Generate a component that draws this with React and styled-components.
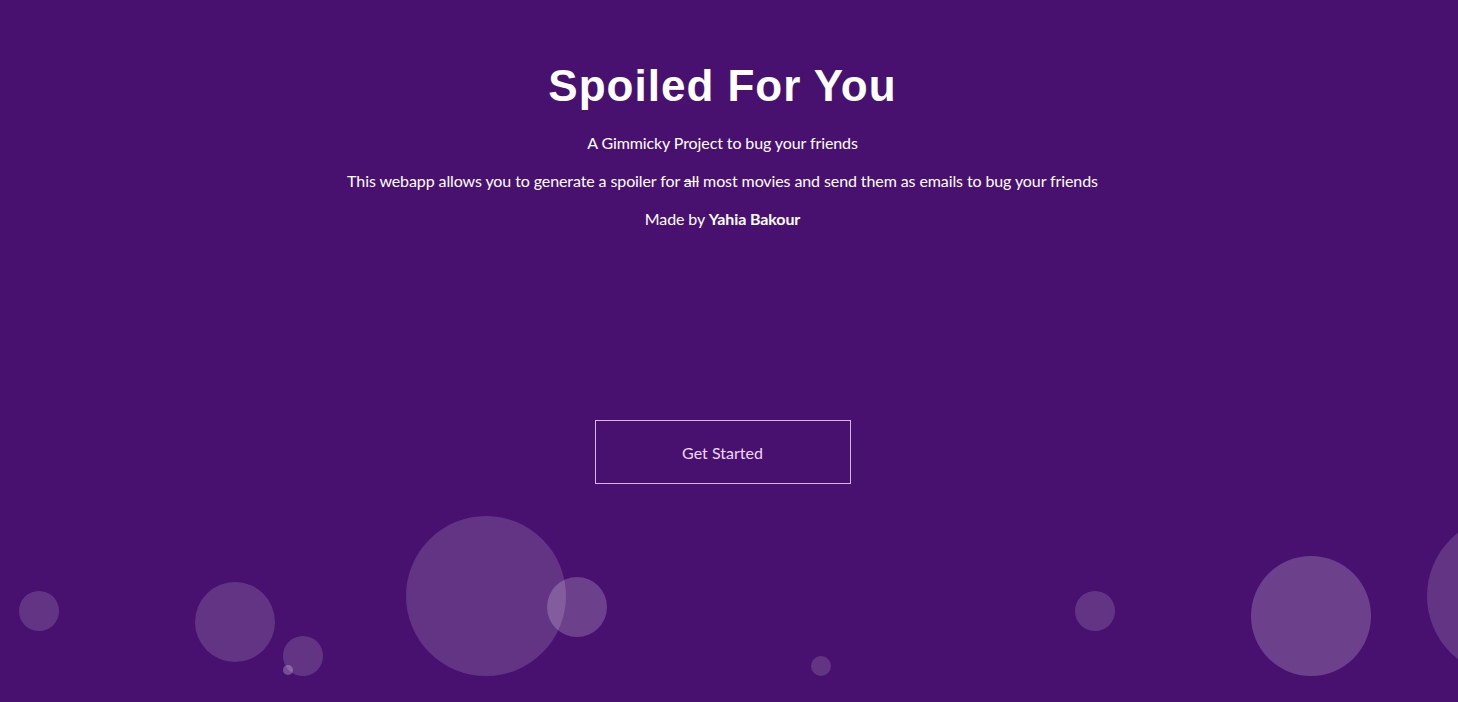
import React from 'react';
import styled, { createGlobalStyle } from 'styled-components';

const GlobalStyle = createGlobalStyle`
  html, body {
    margin: 0;
    padding: 0;
    background-color: #48116f;
  }
  body {
    font-family: Lato, "Open Sans", sans-serif;
    color: #ffffff;
    overflow: hidden;
  }
`;

const Page = styled.div`
  position: relative;
  height: 702px;
  overflow: hidden;
  background-color: #48116f;
`;

const Hero = styled.header`
  display: flex;
  flex-direction: column;
  align-items: center;
  padding: 61px 13px 0 0;
  text-align: center;
`;

const Title = styled.h1`
  margin: 0 0 21px;
  font-family: "Liberation Sans", Arial, sans-serif;
  font-size: 44px;
  font-weight: 700;
  line-height: 50px;
  letter-spacing: 1px;
  color: #ffffff;
`;

const Line = styled.p`
  margin: 0 0 16px;
  font-size: 16px;
  line-height: 22px;
  letter-spacing: -0.1px;
  color: #ffffff;

  &:last-of-type {
    margin-bottom: 0;
  }
`;

const Struck = styled.s`
  text-decoration-thickness: 1px;
`;

const Author = styled.strong`
  font-weight: 700;
`;

const StartButton = styled.button`
  margin-top: 190px;
  width: 256px;
  height: 64px;
  border: 1px solid #d7b6ee;
  background: transparent;
  color: #eed9fb;
  font-family: Lato, sans-serif;
  font-size: 16px;
  cursor: pointer;

  &:hover {
    background-color: rgba(255, 255, 255, 0.08);
  }
`;

const Bubbles = styled.div`
  position: absolute;
  inset: 0;
  pointer-events: none;
`;

const Bubble = styled.span`
  position: absolute;
  border-radius: 50%;
  background-color: rgba(255, 255, 255, ${p => p.$alpha || 0.15});
`;

const bubbles = [
  { x: 39, y: 611, r: 20 },
  { x: 235, y: 622, r: 40 },
  { x: 303, y: 656, r: 20 },
  { x: 288, y: 670, r: 5, alpha: 0.25 },
  { x: 486, y: 596, r: 80 },
  { x: 577, y: 607, r: 30, alpha: 0.2 },
  { x: 821, y: 666, r: 10 },
  { x: 1095, y: 611, r: 20 },
  { x: 1311, y: 616, r: 60, alpha: 0.2 },
  { x: 1507, y: 596, r: 80 },
];

const App = () => (
  <Page>
    <GlobalStyle />
    <Bubbles>
      {bubbles.map((b, i) => (
        <Bubble
          key={i}
          $alpha={b.alpha}
          style={{ left: b.x - b.r, top: b.y - b.r, width: b.r * 2, height: b.r * 2 }}
        />
      ))}
    </Bubbles>
    <Hero>
      <Title>Spoiled For You</Title>
      <Line>A Gimmicky Project to bug your friends</Line>
      <Line>
        This webapp allows you to generate a spoiler for <Struck>all</Struck> most movies and send them as
        emails to bug your friends
      </Line>
      <Line>
        Made by <Author>Yahia Bakour</Author>
      </Line>
      <StartButton>Get Started</StartButton>
    </Hero>
  </Page>
);

export default App;
